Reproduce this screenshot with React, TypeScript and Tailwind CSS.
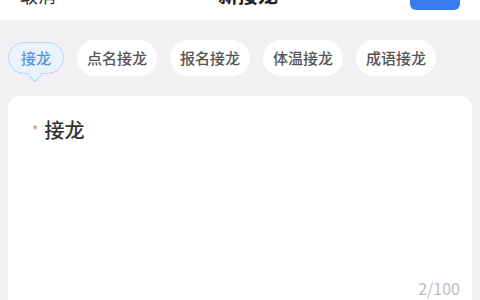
const tabs = ['点名接龙', '报名接龙', '体温接龙', '成语接龙']

export default function App() {
  return (
    <div
      className="w-[480px] h-[300px] overflow-hidden bg-[#f1f1f3]"
      style={{ fontFamily: '"Noto Sans CJK SC", "Noto Sans", sans-serif' }}
    >
      {/* header, mostly scrolled off the top */}
      <div className="h-[20px] bg-white relative overflow-hidden">
        <div className="flex items-center justify-between px-[20px] -mt-[19px] h-[28px]">
          <span className="text-[18px] text-[#333] leading-none">取消</span>
          <span className="text-[20px] font-bold text-[#222] leading-none ml-[30px]">新接龙</span>
          <span className="w-[50px] h-[26px] rounded-[6px] bg-[#3a7bef] mt-[4px]"></span>
        </div>
      </div>

      {/* type chips */}
      <div className="flex items-center gap-[13px] pl-[8px] pt-[20px]">
        <div className="relative">
          <div className="h-[32px] px-[12px] flex items-center rounded-full border border-[#b9d4f3] bg-[#eaf3fd] text-[15px] font-medium text-[#5a92dd]">
            接龙
          </div>
          <div className="absolute left-[22px] -bottom-[6px] w-[10px] h-[10px] rotate-45 bg-[#eaf3fd] border-r border-b border-[#b9d4f3]"></div>
        </div>
        {tabs.map((t) => (
          <div
            key={t}
            className="h-[36px] px-[10px] flex items-center rounded-full bg-white text-[15px] font-medium text-[#555]"
          >
            {t}
          </div>
        ))}
      </div>

      {/* content card */}
      <div className="mx-[8px] mt-[20px] h-[220px] bg-white rounded-t-[12px] relative px-[24px] pt-[24px]">
        <div className="flex items-center gap-[6px]">
          <span className="text-[14px] text-[#e5828f] leading-none">*</span>
          <span className="text-[20px] font-medium text-[#333] leading-none">接龙</span>
        </div>
        <div className="absolute right-[12px] top-[180px] text-[16px] text-[#bcbcbc]">2/100</div>
      </div>
    </div>
  )
}
